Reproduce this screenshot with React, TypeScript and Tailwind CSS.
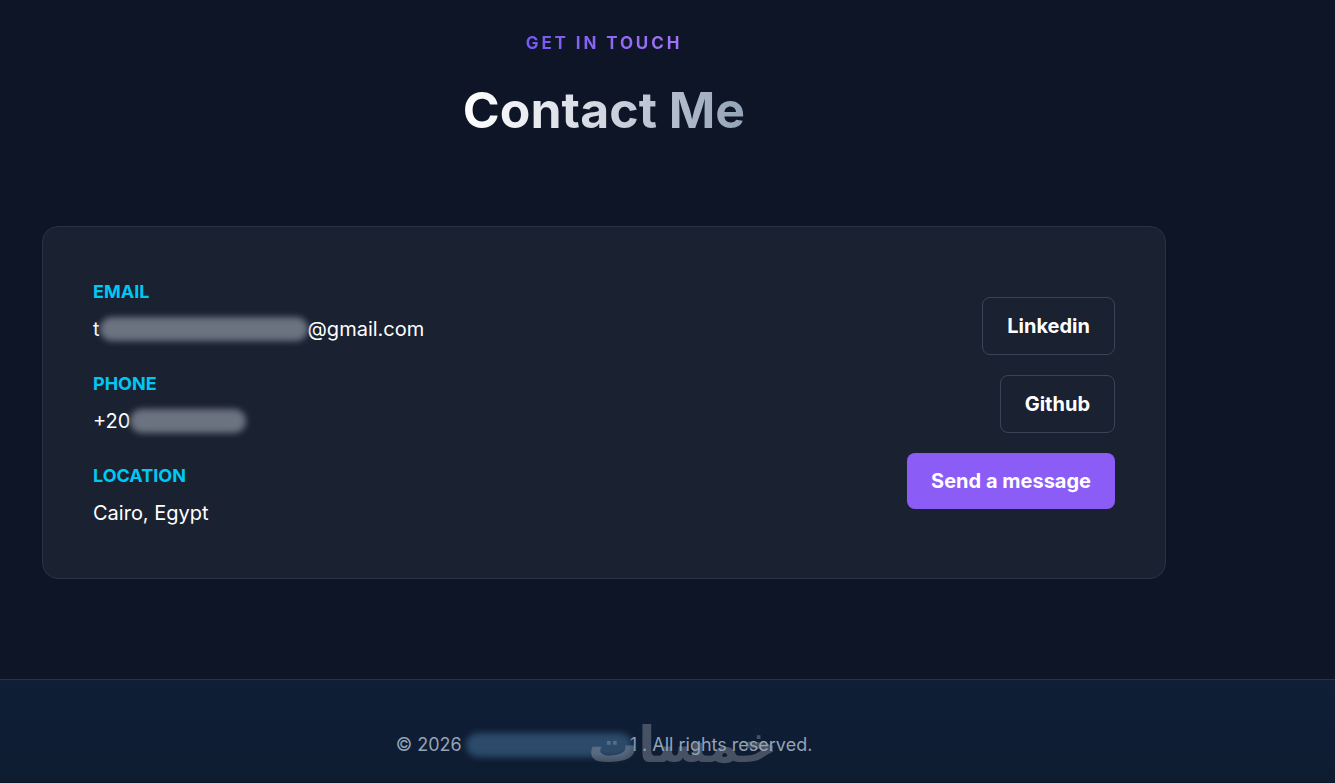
import * as React from "react"

const contacts = [
  { label: "EMAIL", kind: "email" },
  { label: "PHONE", kind: "phone" },
  { label: "LOCATION", kind: "location" },
]

function Blur({ w }: { w: number }) {
  return (
    <span
      className="inline-block h-[24px] rounded-full bg-[#6b7280] blur-[3px] align-middle"
      style={{ width: w }}
    />
  )
}

function ContactValue({ kind }: { kind: string }) {
  if (kind === "email") {
    return (
      <p className="flex items-center text-[20px] leading-[30px] text-white">
        t<Blur w={208} />@gmail.com
      </p>
    )
  }
  if (kind === "phone") {
    return (
      <p className="flex items-center text-[20px] leading-[30px] text-white">
        +20<Blur w={116} />
      </p>
    )
  }
  return <p className="mt-0.5 text-[20px] leading-[30px] text-white">Cairo, Egypt</p>
}

export default function App() {
  return (
    <div
      className="min-h-screen bg-[#0d1527] text-white"
      style={{ fontFamily: "Inter, 'Noto Sans', sans-serif" }}
    >
      <section className="w-[1124px] ml-[42px] pt-[30px] pb-[100px]">
        {/* Heading */}
        <div className="flex flex-col items-center">
          <p className="bg-gradient-to-r from-[#7558f0] to-[#a373f5] bg-clip-text text-[17px] font-bold leading-[26px] tracking-[0.17em] text-transparent">
            GET IN TOUCH
          </p>
          <h2 className="mt-[29px] bg-gradient-to-r from-white via-[#d1d6e0] to-[#94a3b8] bg-clip-text text-[50px] font-bold leading-[50px] text-transparent">
            Contact Me
          </h2>
        </div>

        {/* Card */}
        <div className="mt-[91px] flex h-[353px] items-center justify-between rounded-2xl border border-[#2a3344] bg-[#1a2131] pl-12 pr-[50px]">
          <div className="flex flex-col gap-[26px] pl-[2px]">
            {contacts.map((c) => (
              <div key={c.label}>
                <p className="mb-2 text-[18px] font-bold leading-7 text-[#00c8f5]">{c.label}</p>
                <ContactValue kind={c.kind} />
              </div>
            ))}
          </div>

          <div className="flex flex-col items-end gap-5">
            <button className="rounded-lg border border-[#3a4456] bg-transparent px-6 py-[14px] text-[20px] font-bold leading-7 text-white">
              Linkedin
            </button>
            <button className="rounded-lg border border-[#3a4456] bg-transparent px-6 py-[14px] text-[20px] font-bold leading-7 text-white">
              Github
            </button>
            <button className="rounded-lg bg-[#8b5cf6] px-6 py-[14px] text-[20px] font-bold leading-7 text-white">
              Send a message
            </button>
          </div>
        </div>
      </section>

      {/* Footer */}
      <footer className="relative h-[103px] border-t border-[#263246] bg-gradient-to-b from-[#0f1f36] to-[#0e1c32]">
        <div className="w-[1124px] ml-[42px] flex justify-center pt-[51px]">
          <p className="flex items-center text-[18px] leading-[27px] text-[#94a3b8]">
            © 2026
            <span className="ml-1 inline-block h-[24px] w-[166px] rounded-full bg-[#2c4a6a] blur-[3px]" />
            <span className="ml-[-2px]">1 . All rights reserved.</span>
          </p>
        </div>
        {/* watermark */}
        <span
          className="pointer-events-none absolute left-[588px] top-[38px] text-[50px] font-bold leading-none text-[#9aa3ad] opacity-40"
          style={{ fontFamily: "'Noto Sans', 'DejaVu Sans', sans-serif" }}
        >
          خمسات
        </span>
      </footer>
    </div>
  )
}
